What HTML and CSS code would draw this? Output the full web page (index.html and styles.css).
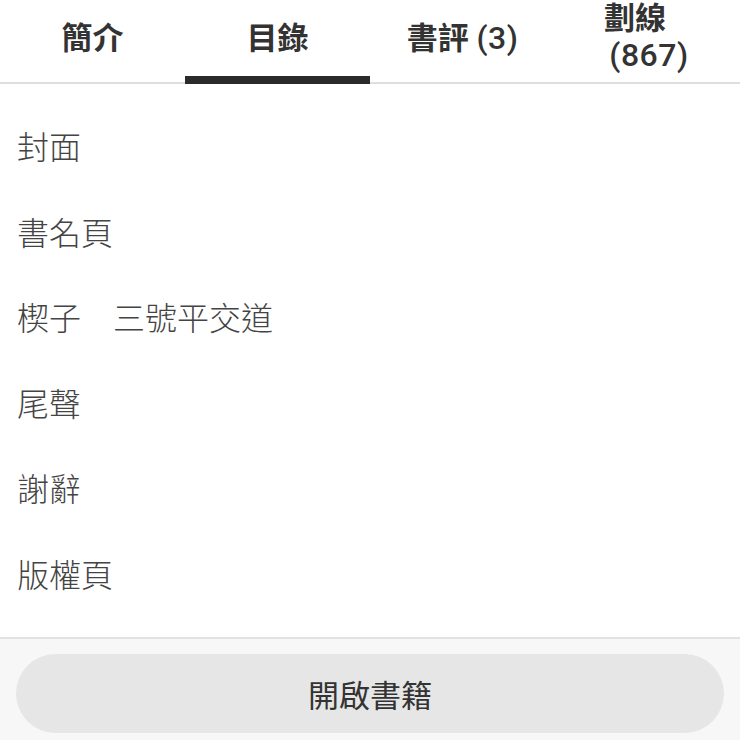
FILE: index.html
```html
<!DOCTYPE html>
<html lang="zh-Hant">
<head>
<meta charset="utf-8">
<link rel="stylesheet" href="styles.css">
</head>
<body>
<div class="page">
  <nav class="tabs">
    <div class="tab"><span class="tab-label">簡介</span></div>
    <div class="tab active"><span class="tab-label">目錄</span></div>
    <div class="tab"><span class="tab-label">書評 <span class="num">(3)</span></span></div>
    <div class="tab"><span class="tab-label two"><span class="l1">劃線</span><span class="num">(867)</span></span></div>
  </nav>
  <ul class="toc">
    <li>封面</li>
    <li>書名頁</li>
    <li>楔子　三號平交道</li>
    <li>尾聲</li>
    <li>謝辭</li>
    <li>版權頁</li>
  </ul>
  <footer class="footer">
    <button class="open-btn">開啟書籍</button>
  </footer>
</div>
</body>
</html>
```
FILE: styles.css
```css
* { box-sizing: border-box; }
html, body { margin: 0; padding: 0; background: #fff; }
body {
  font-family: Roboto, "Noto Sans CJK TC", "Noto Sans", sans-serif;
  color: #333;
}
.page {
  height: 740px;
  display: flex;
  flex-direction: column;
}
.tabs {
  display: grid;
  grid-template-columns: repeat(4, 1fr);
  grid-template-rows: 82px;
  height: 84px;
  border-bottom: 2px solid #dedede;
  flex: none;
}
.tab {
  display: flex;
  align-items: center;
  justify-content: center;
  height: 84px;
  border-bottom: 8px solid transparent;
}
.tab.active { border-bottom-color: #2b2b2b; }
.tab-label {
  font-size: 31px;
  font-weight: 700;
  color: #333;
  line-height: 37px;
  white-space: nowrap;
}
.tab-label .num {
  font-family: Roboto, sans-serif;
  font-weight: 500;
  font-size: 32px;
  letter-spacing: 0.5px;
}
.tab-label.two {
  display: flex;
  flex-direction: column;
  align-items: center;
  line-height: 36px;
  margin-top: -2px;
  margin-left: 3px;
}
.tab-label .l1 { padding-right: 28px; }
.toc {
  list-style: none;
  margin: 0;
  padding: 22px 0 0 17px;
  flex: 1;
}
.toc li {
  height: 85.5px;
  line-height: 85.5px;
  font-size: 32px;
  font-weight: 300;
  color: #444;
  white-space: pre;
}
.footer {
  flex: none;
  border-top: 2px solid #e2e2e2;
  background: #f7f7f7;
  padding: 15px 16px 7px;
}
.open-btn {
  display: block;
  width: 100%;
  height: 79px;
  border: none;
  border-radius: 40px;
  background: #e6e6e6;
  font-family: Roboto, "Noto Sans CJK TC", sans-serif;
  font-size: 31px;
  font-weight: 400;
  color: #333;
  padding: 0;
}
```
